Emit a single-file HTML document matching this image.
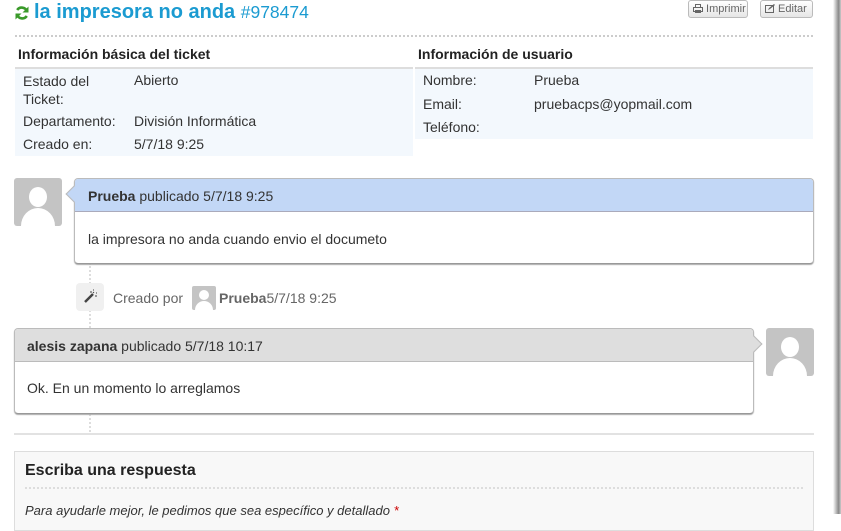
<!DOCTYPE html>
<html><head><meta charset="utf-8"><style>
*{margin:0;padding:0;box-sizing:border-box}
body{width:841px;height:514px;overflow:hidden;background:#fff;font-family:"Liberation Sans",Arial,sans-serif;color:#333;font-size:14px;position:relative}
.a{position:absolute}
.t{white-space:nowrap}
.av{position:absolute;width:48px;height:48px;background:#c4c4c4;border-radius:3px;overflow:hidden}
.av:before{content:"";position:absolute;left:15px;top:9px;width:18px;height:20px;border-radius:50%;background:#fff}
.av:after{content:"";position:absolute;left:7px;top:30px;width:34px;height:36px;border-radius:50% 50% 0 0;background:#fff}
.sav{position:absolute;width:24px;height:24px;background:#c4c4c4;border-radius:2px;overflow:hidden}
.sav:before{content:"";position:absolute;left:7px;top:4px;width:10px;height:10px;border-radius:50%;background:#fff}
.sav:after{content:"";position:absolute;left:3px;top:15px;width:18px;height:18px;border-radius:50% 50% 0 0;background:#fff}
.btn{position:absolute;top:0;height:18px;border:1px solid #bbb;border-radius:3px;background:linear-gradient(#fff,#e6e6e6);font-size:11px;color:#666;line-height:16px;padding:0 4px;white-space:nowrap}
</style></head><body>
<svg class="a" style="left:14px;top:5px" width="16" height="16" viewBox="0 0 16 16"><path d="M13 6.5A5.5 5.5 0 0 0 3.2 5" stroke="#3a9a2a" stroke-width="2.6" fill="none"/><path d="M14.5 1.5v6h-6z" fill="#3a9a2a"/><path d="M3 9.5a5.5 5.5 0 0 0 9.8 1.5" stroke="#3a9a2a" stroke-width="2.6" fill="none"/><path d="M1.5 14.5v-6h6z" fill="#3a9a2a"/></svg>
<div class="a t" style="left:34px;top:1px;font-size:20px;font-weight:bold;color:#1b9bd1">la impresora no anda <span style="font-weight:normal;font-size:17.5px">#978474</span></div>
<div class="btn" style="left:688px;width:60px"><svg width="10" height="9" viewBox="0 0 10 9" style="vertical-align:-1px"><rect x="2.5" y="0.5" width="5" height="3" fill="none" stroke="#666"/><rect x="0.5" y="3.5" width="9" height="4" fill="none" stroke="#666"/><rect x="2" y="6" width="6" height="3" fill="#666"/></svg> Imprimir</div>
<div class="btn" style="left:760px;width:53px"><svg width="10" height="9" viewBox="0 0 10 9" style="vertical-align:-1px"><rect x="0.5" y="1.5" width="8" height="7" fill="none" stroke="#666"/><path d="M3 6l1-2 5-4 1 1-5 4z" fill="#666"/></svg> Editar</div>
<div class="a" style="left:15px;top:35px;width:798px;border-top:2px dotted #ccc"></div>

<div class="a t" style="left:18px;top:46px;font-weight:bold;font-size:14px;color:#222">Información básica del ticket</div>
<div class="a" style="left:15px;top:67px;width:398px;height:89px;background:#f3f8fd;border-top:2px solid #ddd"></div>
<div class="a" style="left:23px;top:72px;line-height:18px">Estado del<br>Ticket:</div>
<div class="a t" style="left:134px;top:72px">Abierto</div>
<div class="a t" style="left:23px;top:113px">Departamento:</div>
<div class="a t" style="left:134px;top:113px">División Informática</div>
<div class="a t" style="left:23px;top:136px">Creado en:</div>
<div class="a t" style="left:134px;top:136px">5/7/18 9:25</div>

<div class="a t" style="left:418px;top:46px;font-weight:bold;font-size:14px;color:#222">Información de usuario</div>
<div class="a" style="left:415px;top:67px;width:398px;height:72px;background:#f3f8fd;border-top:2px solid #ddd"></div>
<div class="a t" style="left:423px;top:72px">Nombre:</div>
<div class="a t" style="left:534px;top:72px">Prueba</div>
<div class="a t" style="left:423px;top:96px">Email:</div>
<div class="a t" style="left:534px;top:96px">pruebacps@yopmail.com</div>
<div class="a t" style="left:423px;top:119px">Teléfono:</div>

<div class="a" style="left:89px;top:263px;height:172px;border-left:2px dotted #ddd"></div>

<div class="av" style="left:14px;top:178px"></div>
<div class="a" style="left:74px;top:178px;width:740px;height:86px;border:1px solid #bbb;border-bottom-color:#999;border-radius:4px;background:#fff;box-shadow:0 1px 1px #aaa"></div>
<div class="a" style="left:75px;top:179px;width:738px;height:33px;background:#c2d7f6;border-bottom:1px solid #aab;border-radius:3px 3px 0 0"></div>
<div class="a" style="left:68px;top:188px;width:12px;height:12px;background:#c2d7f6;border-left:1px solid #bbb;border-bottom:1px solid #bbb;transform:rotate(45deg)"></div>
<div class="a t" style="left:88px;top:188px"><b>Prueba</b> publicado 5/7/18 9:25</div>
<div class="a t" style="left:88px;top:231px">la impresora no anda cuando envio el documeto</div>

<div class="a" style="left:76px;top:283px;width:28px;height:28px;background:#f0f0f0;border-radius:4px"></div>
<svg class="a" style="left:82px;top:289px" width="16" height="16" viewBox="0 0 16 16"><path d="M3 13L11 5" stroke="#444" stroke-width="2.5"/><path d="M9 2v2M12 3l-1 1M13 7h2M11 1h1M14 4h1" stroke="#444" stroke-width="1"/></svg>
<div class="a t" style="left:113px;top:290px;color:#666">Creado por</div>
<div class="sav" style="left:192px;top:286px"></div>
<div class="a t" style="left:219px;top:290px;color:#666"><b>Prueba</b>5/7/18 9:25</div>

<div class="a" style="left:14px;top:328px;width:740px;height:86px;border:1px solid #bbb;border-bottom-color:#999;border-radius:4px;background:#fff;box-shadow:0 1px 1px #aaa"></div>
<div class="a" style="left:15px;top:329px;width:738px;height:33px;background:#dedede;border-bottom:1px solid #bbb;border-radius:3px 3px 0 0"></div>
<div class="a" style="left:748px;top:338px;width:12px;height:12px;background:#dedede;border-right:1px solid #bbb;border-top:1px solid #bbb;transform:rotate(45deg)"></div>
<div class="a t" style="left:27px;top:338px"><b>alesis zapana</b> publicado 5/7/18 10:17</div>
<div class="a t" style="left:27px;top:380px">Ok. En un momento lo arreglamos</div>
<div class="av" style="left:766px;top:328px"></div>

<div class="a" style="left:14px;top:433px;width:800px;border-top:2px solid #e2e2e2"></div>
<div class="a" style="left:14px;top:451px;width:800px;height:80px;background:#f8f8f8;border:1px solid #ddd"></div>
<div class="a t" style="left:25px;top:462px;font-weight:bold;font-size:16px;color:#222">Escriba una respuesta</div>
<div class="a" style="left:25px;top:487px;width:778px;border-top:2px dotted #ddd"></div>
<div class="a t" style="left:25px;top:503px;font-style:italic;font-size:13px">Para ayudarle mejor, le pedimos que sea específico y detallado <span style="color:#c00">*</span></div>

<div class="a" style="left:833px;top:0;width:8px;height:514px;background:linear-gradient(90deg,#fff,#bbb 40%,#888 70%,#ccc)"></div>
</body></html>
